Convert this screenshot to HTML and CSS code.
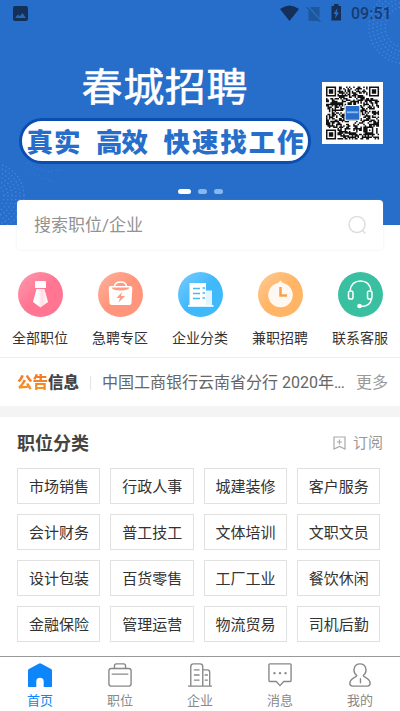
FILE: index.html
```html
<!DOCTYPE html>
<html lang="zh-CN">
<head>
<meta charset="utf-8">
<meta name="viewport" content="width=device-width, initial-scale=1">
<title>春城招聘</title>
<link rel="stylesheet" href="styles.css">
</head>
<body>
<header class="banner">
  <svg class="slide" viewBox="0 0 400 225">
    <g class="dots">
      <circle cx="406" cy="27" r="21"/><circle cx="406" cy="27" r="25"/><circle cx="406" cy="27" r="29"/><circle cx="406" cy="27" r="33"/><circle cx="406" cy="27" r="37"/>
      <circle cx="-9" cy="196" r="13"/><circle cx="-9" cy="196" r="17"/><circle cx="-9" cy="196" r="21"/><circle cx="-9" cy="196" r="25"/><circle cx="-9" cy="196" r="29"/><circle cx="-9" cy="196" r="33"/>
    </g>
    <g class="dots faint"><path d="M28 163l9 6 12 3 14-3M32 172l10 6 12 4"/></g>
    <text class="slide-title" transform="translate(81.500 101) scale(1 .95)" textLength="166">春城招聘</text>
    <rect class="pill" x="20.500" y="119.500" width="289" height="43" rx="21.500"/>
    <g class="slogan">
      <text x="26.500" y="151.500" textLength="54">真实</text>
      <text x="96" y="151.500" textLength="52">高效</text>
      <text x="163.500" y="151.500" textLength="140">快速找工作</text>
    </g>
    <rect x="322" y="82" width="61" height="62" fill="#fff"/>
    <g transform="translate(326 86.500) scale(1.432)">
      <path id="qr" fill="#111"/>
      <rect x="13" y="13" width="11" height="11" rx="1" fill="#fff"/>
      <rect x="13.700" y="13.700" width="9.600" height="9.600" rx=".5" fill="#276ecb"/>
      <path d="M14.500 18h8" stroke="#8fb9f0" stroke-width="1.300"/>
    </g>
  </svg>
  <div class="status">
    <svg class="status-pic" viewBox="0 0 15 15"><rect width="15" height="15" rx="2"/><path fill="#2b66b5" d="M2 12l3-3.500 1.800 1.800L9.500 7l3.500 5z"/></svg>
    <svg class="status-icons" viewBox="0 0 62 18">
      <path d="M0 5Q9.500-2 19 5L9.500 17z"/>
      <path fill="#1f579f" d="M31 3h8.500v14H28.500V5.500z"/><path stroke="#276ecb" stroke-width="1.500" d="M27.500 2l14 15"/><path stroke="#1f579f" stroke-width="1.200" d="M26.500 3l14 15"/>
      <path d="M51.500 2h2.500V0h4.500v2H61v14.500h-9.500z"/><path fill="#276ecb" d="M57.500 4l-4 6h2.300l-.8 4.500 4-6h-2.200z"/>
    </svg>
    <span class="clock">09:51</span>
  </div>
  <div class="pager"><i class="on"></i><i></i><i></i></div>
</header>

<main>
  <div class="search">
    <span>搜索职位/企业</span>
    <svg viewBox="0 0 20 20"><circle cx="10" cy="9.500" r="8"/><path d="M15.500 15.500l2.500 2.500"/></svg>
  </div>

  <nav class="shortcuts">
    <a><svg viewBox="0 0 45 45"><defs>
        <linearGradient id="g1" x2="1" y2="1"><stop stop-color="#ff9baf"/><stop offset=".5" stop-color="#ff7592"/></linearGradient>
        <linearGradient id="g2" x2="1" y2="1"><stop stop-color="#ffb19d"/><stop offset=".5" stop-color="#ff957b"/></linearGradient>
        <linearGradient id="g3" x2="1" y2="1"><stop stop-color="#78ccff"/><stop offset=".5" stop-color="#40b9fb"/></linearGradient>
        <linearGradient id="g4" x2="1" y2="1"><stop stop-color="#ffca94"/><stop offset=".5" stop-color="#ffb565"/></linearGradient>
        <linearGradient id="tie"><stop stop-color="#fff"/><stop offset=".35" stop-color="#fff"/><stop offset=".6" stop-color="#ffdce4"/><stop offset="1" stop-color="#fff"/></linearGradient>
      </defs><circle cx="22.500" cy="22.500" r="22.500" fill="url(#g1)"/>
      <path fill="#fff" d="M18 9h9q1 0 1 1v6H17v-6q0-1 1-1z"/><path fill="url(#tie)" d="M18.500 17h8l3.500 13-7.500 5.500L15 30z"/></svg>全部职位</a>
    <a><svg viewBox="0 0 45 45"><circle cx="22.500" cy="22.500" r="22.500" fill="url(#g2)"/>
      <path fill="none" stroke="#fff" stroke-width="1.500" d="M16.500 15q0-5 6-5t6 5"/>
      <path fill="#fff" d="M13 14h19q2.500 0 2.300 2.500L33.500 31q-.2 2-2.200 2H13.700q-2 0-2.200-2l-.8-14.500Q10.500 14 13 14z"/><path fill="#ff9c84" d="M13.500 15.500h18q-1 3-9 3t-9-3zM24 20l-5.500 6h3.500l-1.500 4.500 6.500-6.500h-4z"/></svg>急聘专区</a>
    <a><svg viewBox="0 0 45 45"><circle cx="22.500" cy="22.500" r="22.500" fill="url(#g3)"/>
      <path fill="#fff" d="M11.500 11h16.500v22H11.500z"/><path fill="#e3f5ff" d="M28 18.500h6V33h-6z"/><path fill="#fff" d="M10 33h25.500v1.800H10z"/><path stroke="#48b8f8" stroke-width="1.600" d="M15 16.500h7M15 21.500h7M15 26.500h7M24.500 16h2.500M24.500 21h2.500M24.500 26h2.500"/></svg>企业分类</a>
    <a><svg viewBox="0 0 45 45"><circle cx="22.500" cy="22.500" r="22.500" fill="url(#g4)"/>
      <path fill="#fff8f1" d="M22.500 8.500l2.500 2.500a12.300 12.300 0 1 1-5 0z"/><path fill="none" stroke="#f6a052" stroke-width="2.500" d="M22.500 15v8.500H29"/></svg>兼职招聘</a>
    <a><svg viewBox="0 0 45 45"><circle cx="22.500" cy="22.500" r="22.500" fill="#39c0a0"/>
      <g fill="none" stroke="#fff" stroke-width="1.500"><path d="M12 18.500C13 12 17 9 22.500 9S32 12 33 18.500M33.500 27c-1 5-5 7.500-10.500 7.500"/><rect x="10.500" y="19" width="4.500" height="8" rx="1.800"/><rect x="29.500" y="19" width="4.500" height="8" rx="1.800"/></g><circle cx="21.500" cy="34" r="2.300" fill="#fff"/></svg>联系客服</a>
  </nav>

  <section class="notice">
    <strong class="notice-logo"><em>公告</em>信息</strong>
    <span class="notice-text">中国工商银行云南省分行 2020年<span class="ellipsis">...</span></span>
    <a>更多</a>
  </section>

  <section class="jobs">
    <div class="jobs-head">
      <h2>职位分类</h2>
      <a><svg viewBox="0 0 13 14"><path d="M1 1h11v12L6.500 10.500 1 13zM6.500 3.500v5M4 6h5"/></svg>订阅</a>
    </div>
    <div class="grid">
      <a>市场销售</a><a>行政人事</a><a>城建装修</a><a>客户服务</a>
      <a>会计财务</a><a>普工技工</a><a>文体培训</a><a>文职文员</a>
      <a>设计包装</a><a>百货零售</a><a>工厂工业</a><a>餐饮休闲</a>
      <a>金融保险</a><a>管理运营</a><a>物流贸易</a><a>司机后勤</a>
    </div>
  </section>
</main>

<footer class="tabs">
  <a class="active"><svg viewBox="0 0 26 26"><path fill="#0c86fa" stroke="none" d="M0 8q0-1 1-1.600L11.500.8Q13 0 14.500.8L25 6.400q1 .6 1 1.600V25q0 1-1 1h-8v-6a4 4 0 0 0-8 0v6H1q-1 0-1-1z"/></svg>首页</a>
  <a><svg viewBox="0 0 26 26"><rect x="1" y="6" width="24" height="19" rx="2.500"/><path d="M7 6V3q0-2 2-2h8q2 0 2 2v3M4.500 12h17"/></svg>职位</a>
  <a><svg viewBox="0 0 26 26"><path d="M3 25V4q0-3 3-3h7q3 0 3 3v21M16 7.500h5q2.500 0 2.500 2.500v15M.5 25h25M7 7.500h5M7 13h5M7 18.500h5M18.500 13h2.500M18.500 18.500h2.500"/></svg>企业</a>
  <a><svg viewBox="0 0 26 26"><path d="M2 1h22q1 0 1 1v17q0 1-1 1h-7l-4 4.500L9 20H2q-1 0-1-1V2q0-1 1-1z"/><path class="dot3" d="M7 11h0M13 11h0M19 11h0"/></svg>消息</a>
  <a><svg viewBox="0 0 26 26"><path d="M9.500 13.500C4.500 9.500 6 1 13 1s8.500 8.500 3.500 12.500c0 2 7.500 3 7.500 8.500 0 2-1 3-3 3H5q-3 0-3-3C2 16.500 9.500 15.500 9.500 13.500zM13.500 17v4.500"/></svg>我的</a>
</footer>
<script src="qr.js"></script>
</body>
</html>
```

FILE: styles.css
```css
* { box-sizing: border-box; }

body {
  margin: 0;
  height: 711px;
  display: flex;
  flex-direction: column;
  overflow: hidden;
  background: #fff;
  color: #333;
  font-family: Roboto, "Noto Sans CJK SC", sans-serif;
}

svg { display: block; flex: none; }

.banner { position: relative; height: 225px; flex: none; background: #276ecb; }
.slide { width: 400px; height: 225px; }
.dots { fill: none; stroke: #4584dc; stroke-width: 1.6; stroke-linecap: round; stroke-dasharray: 0 3.8; }
.faint { opacity: .5; }
.slide-title { font-size: 41px; font-weight: 400; fill: #fff; stroke: #fff; stroke-width: .6; stroke-linejoin: round; }
.pill { fill: #fff; stroke: #0b4eb0; stroke-width: 3; }
.slogan { font-size: 26.5px; font-weight: 900; fill: #276ecb; }

.status {
  position: absolute;
  inset: 0 9px auto 13px;
  height: 27px;
  display: flex;
  align-items: center;
  fill: #142f58;
}
.status-pic { width: 15px; height: 15px; }
.status-icons { width: 62px; height: 18px; margin: -2px 9px 0 auto; }
.clock { width: 40px; font-size: 16px; font-weight: 500; line-height: 27px; color: #173c72; }

.pager { position: absolute; left: 178px; top: 189px; display: flex; gap: 7px; }
.pager i { width: 9px; height: 5px; border-radius: 3px; background: #8cb5ee; }
.pager .on { width: 13px; background: #fff; }

main { flex: 1; }

.search {
  position: relative;
  height: 50px;
  margin: -25px 17px 0;
  padding: 0 16px 0 17px;
  display: flex;
  align-items: center;
  justify-content: space-between;
  border-radius: 4px;
  background: #fff;
  box-shadow: 0 0 2px rgba(150, 175, 210, .3);
  font-size: 17px;
  line-height: 24px;
  color: #929292;
}
.search svg { width: 20px; height: 20px; fill: none; stroke: #ddd; stroke-width: 1.5; stroke-linecap: round; }

.shortcuts { display: grid; grid-template-columns: repeat(5, 80px); height: 108px; padding-top: 22px; border-bottom: 1px solid #eee; }
.shortcuts a { display: flex; flex-direction: column; align-items: center; gap: 11px; font-size: 14px; line-height: 20px; }
.shortcuts svg { width: 45px; height: 45px; }

.notice { display: flex; align-items: center; height: 59px; padding: 2px 12px 0 17px; border-bottom: 11px solid #f4f4f4; font-size: 16px; line-height: 24px; }
.notice-logo { width: 74px; margin-right: 11px; border-right: 1px solid #e5e5e5; font-size: 15.5px; font-weight: 900; line-height: 14px; white-space: nowrap; color: #444; }
.notice-logo em { font-style: normal; color: transparent; background: linear-gradient(#f0762a, #f79a20); background-clip: text; }
.notice-text { flex: 1; color: #666; white-space: nowrap; }
.ellipsis { letter-spacing: -.8px; }
.notice a { color: #999; }

.jobs { padding: 0 17px; }
.jobs-head { display: flex; align-items: center; justify-content: space-between; height: 51px; padding-top: 1px; }
h2 { margin: 1px 0 0; font-size: 18px; font-weight: 700; line-height: 26px; color: #444; }
.jobs-head a { display: flex; align-items: center; gap: 7px; font-size: 15px; line-height: 22px; color: #999; }
.jobs-head svg { width: 13px; height: 14px; fill: none; stroke: #aaa; stroke-width: 1.2; }

.grid { display: grid; grid-template-columns: repeat(4, 1fr); grid-auto-rows: 36px; gap: 10px; width: 363px; }
.grid a { display: flex; align-items: center; justify-content: center; padding: 2px 0 0 1px; border: 1px solid #e1e1e1; font-size: 15px; line-height: 22px; }

.tabs { display: grid; grid-template-columns: repeat(5, 80px); height: 55px; flex: none; border-top: 1px solid #999; background: #fff; }
.tabs a { display: flex; flex-direction: column; align-items: center; padding-top: 6px; gap: 5px; font-size: 13px; line-height: 18px; color: #888; }
.tabs svg { width: 24px; height: 24px; fill: none; stroke: #888; stroke-width: 1.5; stroke-linecap: round; stroke-linejoin: round; }
.tabs .dot3 { stroke-width: 2.6; }
.tabs .active { color: #0c86fa; }
```

FILE: qr.js
```js
// Fills the banner's 37x37 code with finder squares and data modules.
const size = 37;
let seed = 20951;
const next = () => (seed = (seed * 1103515245 + 12345) % 2147483648) / 2147483648;
const square = (x, y, n) => {
  const mid = (n - 1) / 2;
  const d = Math.max(Math.abs(x - mid), Math.abs(y - mid));
  return n === 7 ? d !== 2 : d !== 1;
};
let d = "";
for (let y = 0; y < size; y++) {
  for (let x = 0; x < size; x++) {
    let dark = next() < 0.52;
    const left = x < 8, right = x > 28, top = y < 8, bottom = y > 28;
    if ((left && top) || (right && top) || (left && bottom)) {
      const fx = right ? x - 30 : x, fy = bottom ? y - 30 : y;
      dark = fx >= 0 && fx < 7 && fy >= 0 && fy < 7 && square(fx, fy, 7);
    } else if (x >= 28 && x < 33 && y >= 28 && y < 33) {
      dark = square(x - 28, y - 28, 5);
    }
    if (dark) d += `M${x} ${y}h1.05v1.05h-1.05z`;
  }
}
document.getElementById("qr").setAttribute("d", d);
```
